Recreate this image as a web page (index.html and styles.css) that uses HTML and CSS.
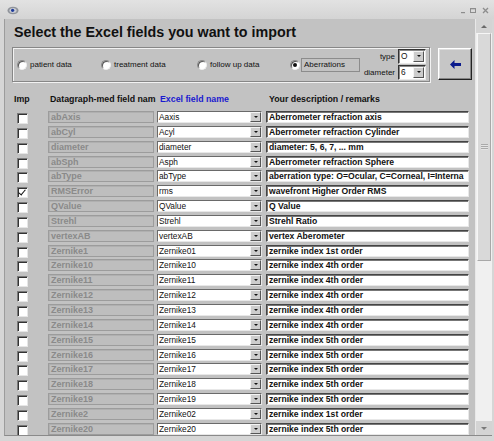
FILE: index.html
```html
<!DOCTYPE html>
<html lang="en">
<head>
  <meta charset="UTF-8" />
  <title>Select the Excel fields you want to import</title>
  <link rel="stylesheet" href="styles.css">
</head>
<body>
<div class="window">

  <!-- Title bar -->
  <div class="titlebar">
    <svg class="app-icon" width="12" height="9" viewBox="0 0 12 9">
      <ellipse cx="6" cy="4.5" rx="5.5" ry="3.8" fill="#8f939a" />
      <ellipse cx="6" cy="4.5" rx="3.6" ry="2.5" fill="#c9ccd2" />
      <circle cx="5.6" cy="4.3" r="1.6" fill="#1d3a9a" />
    </svg>
    <svg class="caption-btns" width="32" height="9" viewBox="0 0 32 9">
      <rect x="2" y="6" width="4" height="1.2" fill="#8d8d8d" />
      <rect x="11.5" y="2.5" width="5" height="4" fill="none" stroke="#8d8d8d" stroke-width="1" />
      <rect x="11" y="2" width="6" height="1.3" fill="#8d8d8d" />
      <path d="M24 2 L29 7 M29 2 L24 7" stroke="#8d8d8d" stroke-width="1.3" />
    </svg>
  </div>

  <div class="client">
    <div class="content">
      <h1>Select the Excel fields you want to import</h1>

      <div class="toolbar">
        <div class="groupbox">
          <label class="radio"><span class="dot"></span>patient data</label>
          <label class="radio"><span class="dot"></span>treatment data</label>
          <label class="radio"><span class="dot"></span>follow up data</label>
          <label class="radio"><span class="dot checked"></span><span class="focus">Aberrations</span></label>
          <div class="selectors">
            <div class="sel-row">
              <span class="sel-label">type</span>
              <span class="combo mini"><span class="combo-text">O</span><span class="drop"></span></span>
            </div>
            <div class="sel-row">
              <span class="sel-label">diameter</span>
              <span class="combo mini"><span class="combo-text">6</span><span class="drop"></span></span>
            </div>
          </div>
        </div>
        <button class="back-btn">
          <svg width="11" height="9" viewBox="0 0 11 9">
            <path d="M0 4.5 L4.5 0 L4.5 3 L11 3 L11 6 L4.5 6 L4.5 9 Z" fill="#0a1a8c" />
          </svg>
        </button>
      </div>

      <!-- Column headers -->
      <div class="row head">
        <span class="h-imp">Imp</span>
        <span class="h-name">Datagraph-med field nam</span>
        <span class="h-excel">Excel field name</span>
        <span class="h-desc">Your description / remarks</span>
      </div>

      <div class="rows">
        <div class="row"><span class="cell-check"><span class="check"></span></span><span class="field-name">abAxis</span><span class="combo"><span class="combo-text">Aaxis</span><span class="drop"></span></span><span class="desc">Aberrometer refraction axis</span></div>
        <div class="row"><span class="cell-check"><span class="check"></span></span><span class="field-name">abCyl</span><span class="combo"><span class="combo-text">Acyl</span><span class="drop"></span></span><span class="desc">Aberrometer refraction Cylinder</span></div>
        <div class="row"><span class="cell-check"><span class="check"></span></span><span class="field-name">diameter</span><span class="combo"><span class="combo-text">diameter</span><span class="drop"></span></span><span class="desc">diameter: 5, 6, 7, ... mm</span></div>
        <div class="row"><span class="cell-check"><span class="check"></span></span><span class="field-name">abSph</span><span class="combo"><span class="combo-text">Asph</span><span class="drop"></span></span><span class="desc">Aberrometer refraction Sphere</span></div>
        <div class="row"><span class="cell-check"><span class="check"></span></span><span class="field-name">abType</span><span class="combo"><span class="combo-text">abType</span><span class="drop"></span></span><span class="desc">aberration type: O=Ocular, C=Corneal, I=Interna</span></div>
        <div class="row"><span class="cell-check"><span class="check on"></span></span><span class="field-name">RMSError</span><span class="combo"><span class="combo-text">rms</span><span class="drop"></span></span><span class="desc">wavefront Higher Order RMS</span></div>
        <div class="row"><span class="cell-check"><span class="check"></span></span><span class="field-name">QValue</span><span class="combo"><span class="combo-text">QValue</span><span class="drop"></span></span><span class="desc">Q Value</span></div>
        <div class="row"><span class="cell-check"><span class="check"></span></span><span class="field-name">Strehl</span><span class="combo"><span class="combo-text">Strehl</span><span class="drop"></span></span><span class="desc">Strehl Ratio</span></div>
        <div class="row"><span class="cell-check"><span class="check"></span></span><span class="field-name">vertexAB</span><span class="combo"><span class="combo-text">vertexAB</span><span class="drop"></span></span><span class="desc">vertex Aberometer</span></div>
        <div class="row"><span class="cell-check"><span class="check"></span></span><span class="field-name">Zernike1</span><span class="combo"><span class="combo-text">Zernike01</span><span class="drop"></span></span><span class="desc">zernike index 1st order</span></div>
        <div class="row"><span class="cell-check"><span class="check"></span></span><span class="field-name">Zernike10</span><span class="combo"><span class="combo-text">Zernike10</span><span class="drop"></span></span><span class="desc">zernike index 4th order</span></div>
        <div class="row"><span class="cell-check"><span class="check"></span></span><span class="field-name">Zernike11</span><span class="combo"><span class="combo-text">Zernike11</span><span class="drop"></span></span><span class="desc">zernike index 4th order</span></div>
        <div class="row"><span class="cell-check"><span class="check"></span></span><span class="field-name">Zernike12</span><span class="combo"><span class="combo-text">Zernike12</span><span class="drop"></span></span><span class="desc">zernike index 4th order</span></div>
        <div class="row"><span class="cell-check"><span class="check"></span></span><span class="field-name">Zernike13</span><span class="combo"><span class="combo-text">Zernike13</span><span class="drop"></span></span><span class="desc">zernike index 4th order</span></div>
        <div class="row"><span class="cell-check"><span class="check"></span></span><span class="field-name">Zernike14</span><span class="combo"><span class="combo-text">Zernike14</span><span class="drop"></span></span><span class="desc">zernike index 4th order</span></div>
        <div class="row"><span class="cell-check"><span class="check"></span></span><span class="field-name">Zernike15</span><span class="combo"><span class="combo-text">Zernike15</span><span class="drop"></span></span><span class="desc">zernike index 5th order</span></div>
        <div class="row"><span class="cell-check"><span class="check"></span></span><span class="field-name">Zernike16</span><span class="combo"><span class="combo-text">Zernike16</span><span class="drop"></span></span><span class="desc">zernike index 5th order</span></div>
        <div class="row"><span class="cell-check"><span class="check"></span></span><span class="field-name">Zernike17</span><span class="combo"><span class="combo-text">Zernike17</span><span class="drop"></span></span><span class="desc">zernike index 5th order</span></div>
        <div class="row"><span class="cell-check"><span class="check"></span></span><span class="field-name">Zernike18</span><span class="combo"><span class="combo-text">Zernike18</span><span class="drop"></span></span><span class="desc">zernike index 5th order</span></div>
        <div class="row"><span class="cell-check"><span class="check"></span></span><span class="field-name">Zernike19</span><span class="combo"><span class="combo-text">Zernike19</span><span class="drop"></span></span><span class="desc">zernike index 5th order</span></div>
        <div class="row"><span class="cell-check"><span class="check"></span></span><span class="field-name">Zernike2</span><span class="combo"><span class="combo-text">Zernike02</span><span class="drop"></span></span><span class="desc">zernike index 1st order</span></div>
        <div class="row"><span class="cell-check"><span class="check"></span></span><span class="field-name">Zernike20</span><span class="combo"><span class="combo-text">Zernike20</span><span class="drop"></span></span><span class="desc">zernike index 5th order</span></div>
      </div>
    </div>

    <!-- Vertical scrollbar -->
    <div class="scrollbar">
      <div class="sb-btn"><span class="tri up"></span></div>
      <div class="sb-thumb"><span class="grip"></span></div>
      <div class="sb-track"></div>
      <div class="sb-btn"><span class="tri down"></span></div>
    </div>
  </div>
</div>
</body>
</html>
```

FILE: styles.css
```css
body {
  margin: 0;
  width: 494px;
  height: 441px;
  overflow: hidden;
  font-family: "Liberation Sans", Arial, sans-serif;
  background: #d6d6d6;
}
.window {
  height: 441px;
  display: flex;
  flex-direction: column;
  background: #d6d6d6;
}
.titlebar {
  height: 19px;
  flex: none;
  display: flex;
  align-items: center;
  justify-content: space-between;
  padding: 0 3px 0 7px;
  background: linear-gradient(#e2e2e2, #d4d4d4);
}
.app-icon {
  margin-top: 2px;
}
.caption-btns {
  margin-top: 1px;
}
.client {
  display: flex;
  height: 416px;
  margin: 0 2px 0 4px;
  border-left: 1px solid #9c9c9c;
  border-bottom: 1px solid #8a8a8a;
  background: #c2c2c2;
  overflow: hidden;
}
.content {
  flex: 1;
  padding-left: 7px;
  overflow: hidden;
}
h1 {
  margin: 5px 0 0;
  padding-left: 2px;
  font-size: 14.3px;
  line-height: 17px;
  font-weight: bold;
  color: #111;
}

/* top controls */
.toolbar {
  display: flex;
  align-items: flex-start;
  margin-top: 6px;
}
.groupbox {
  width: 418px;
  height: 35px;
  box-sizing: border-box;
  border: 1px solid #878787;
  box-shadow: inset 1px 1px #f2f2f2, 1px 1px #f2f2f2;
  display: grid;
  grid-template-columns: 84px 96px 93px 70px 1fr;
  align-items: center;
  padding-left: 4px;
  font-size: 8px;
  color: #111;
}
.radio {
  display: flex;
  align-items: center;
  gap: 3px;
  white-space: nowrap;
}
.dot {
  width: 10px;
  height: 10px;
  box-sizing: border-box;
  border-radius: 50%;
  background: #fff;
  border: 1px solid #8a8a8a;
  border-right-color: #eee;
  border-bottom-color: #eee;
  box-shadow: inset 1px 1px #555;
  position: relative;
  flex: none;
}
.dot.checked::after {
  content: "";
  position: absolute;
  left: 2px;
  top: 2px;
  width: 4px;
  height: 4px;
  border-radius: 50%;
  background: #111;
}
.radio .focus {
  margin-left: -2px;
  width: 61px;
  height: 14px;
  box-sizing: border-box;
  border: 1px solid #8c8c8c;
  line-height: 12px;
  padding-left: 2px;
}
.selectors {
  justify-self: end;
  padding-right: 3px;
  display: flex;
  flex-direction: column;
  align-items: flex-end;
  gap: 1px;
}
.sel-row {
  display: flex;
  align-items: center;
  justify-content: flex-end;
  gap: 3px;
}
.sel-label {
  text-align: right;
}
.back-btn {
  margin: 1px 0 0 8px;
  width: 34px;
  height: 32px;
  padding: 0;
  background: #c6c6c6;
  border: 1px solid #fff;
  border-right-color: #222;
  border-bottom-color: #222;
  box-shadow: inset -1px -1px #858585, inset 1px 1px #dedede;
  display: flex;
  align-items: center;
  justify-content: center;
}

/* grid rows */
.row {
  display: grid;
  grid-template-columns: 36px 109px 109px 203px;
  height: 12px;
  align-items: center;
}
.row.head {
  margin: 12px 0 6px;
  height: 11px;
  font-size: 8.8px;
  line-height: 11px;
  font-weight: bold;
  color: #111;
  white-space: nowrap;
}
.h-imp {
  padding-left: 2px;
}
.h-name {
  padding-left: 2px;
}
.h-excel {
  padding-left: 3px;
  color: #1a1ad0;
}
.h-desc {
  padding-left: 3px;
}
.rows {
  display: grid;
  grid-auto-rows: 14.85px;
  align-items: start;
}
.cell-check {
  height: 12px;
  position: relative;
}
.check {
  position: absolute;
  left: 5px;
  top: 2px;
  width: 11px;
  height: 11px;
  box-sizing: border-box;
  background: #fff;
  border: 1px solid #7a7a7a;
  border-right-color: #e6e6e6;
  border-bottom-color: #e6e6e6;
  box-shadow: inset 1px 1px #333;
}
.check.on::after {
  content: "";
  position: absolute;
  left: 2px;
  top: 0;
  width: 3px;
  height: 6px;
  border: solid #111;
  border-width: 0 1.5px 1.5px 0;
  transform: rotate(40deg);
}
.field-name {
  width: 106px;
  height: 12px;
  box-sizing: border-box;
  border: 1px solid #9c9c9c;
  box-shadow: inset 1px 1px #b0b0b0;
  background: #bebebe;
  color: #8a8a8a;
  font-weight: bold;
  font-size: 9px;
  line-height: 10px;
  padding-left: 2px;
  white-space: nowrap;
  overflow: hidden;
}
.combo {
  width: 105px;
  height: 12px;
  box-sizing: border-box;
  background: #fff;
  border: 1px solid #6a6a6a;
  border-right-color: #e8e8e8;
  border-bottom-color: #e8e8e8;
  display: flex;
  align-items: center;
  justify-content: space-between;
  font-size: 8.3px;
  color: #111;
}
.combo-text {
  padding-left: 1px;
  white-space: nowrap;
}
.combo.mini {
  width: 28px;
  height: 15px;
  border-top-color: #333;
  border-left-color: #333;
  box-shadow: inset 1px 1px #888;
  align-items: flex-start;
}
.combo.mini .combo-text {
  padding: 1px 0 0 2px;
}
.drop {
  width: 11px;
  height: 10px;
  box-sizing: border-box;
  background: #cdcdcd;
  border: 1px solid #f4f4f4;
  border-right-color: #555;
  border-bottom-color: #555;
  position: relative;
  flex: none;
}
.combo.mini .drop {
  height: 11px;
  margin: 1px 1px 0 0;
}
.drop::after {
  content: "";
  position: absolute;
  left: 2.5px;
  top: 3px;
  border: 2px solid transparent;
  border-top: 2.5px solid #111;
}
.desc {
  width: 203px;
  height: 12px;
  box-sizing: border-box;
  background: #fff;
  border: 1px solid #444;
  border-right-color: #e8e8e8;
  border-bottom-color: #e8e8e8;
  box-shadow: inset 1px 1px #777;
  font-weight: bold;
  font-size: 8.6px;
  line-height: 10px;
  padding-left: 2px;
  color: #111;
  white-space: nowrap;
  overflow: hidden;
}

/* scrollbar */
.scrollbar {
  width: 16px;
  flex: none;
  display: flex;
  flex-direction: column;
  background: #f0f0f0;
  border-left: 1px solid #e8e8e8;
}
.sb-btn {
  height: 14px;
  flex: none;
  display: flex;
  align-items: center;
  justify-content: center;
  background: #d4d4d4;
}
.tri {
  border: 3px solid transparent;
}
.tri.up {
  border-bottom: 3px solid #6a6a6a;
  margin-top: -3px;
}
.tri.down {
  border-top: 3px solid #7a7a7a;
  margin-bottom: -3px;
}
.sb-thumb {
  height: 228px;
  flex: none;
  box-sizing: border-box;
  margin: 0 1px;
  background: #d9d9d9;
  border: 1px solid #f6f6f6;
  border-right-color: #a8a8a8;
  border-bottom-color: #a8a8a8;
  display: flex;
  align-items: center;
  justify-content: center;
}
.grip {
  width: 7px;
  height: 6px;
  background: repeating-linear-gradient(#a9a9a9 0 1px, #e4e4e4 1px 2px);
}
.sb-track {
  flex: 1;
}
```
